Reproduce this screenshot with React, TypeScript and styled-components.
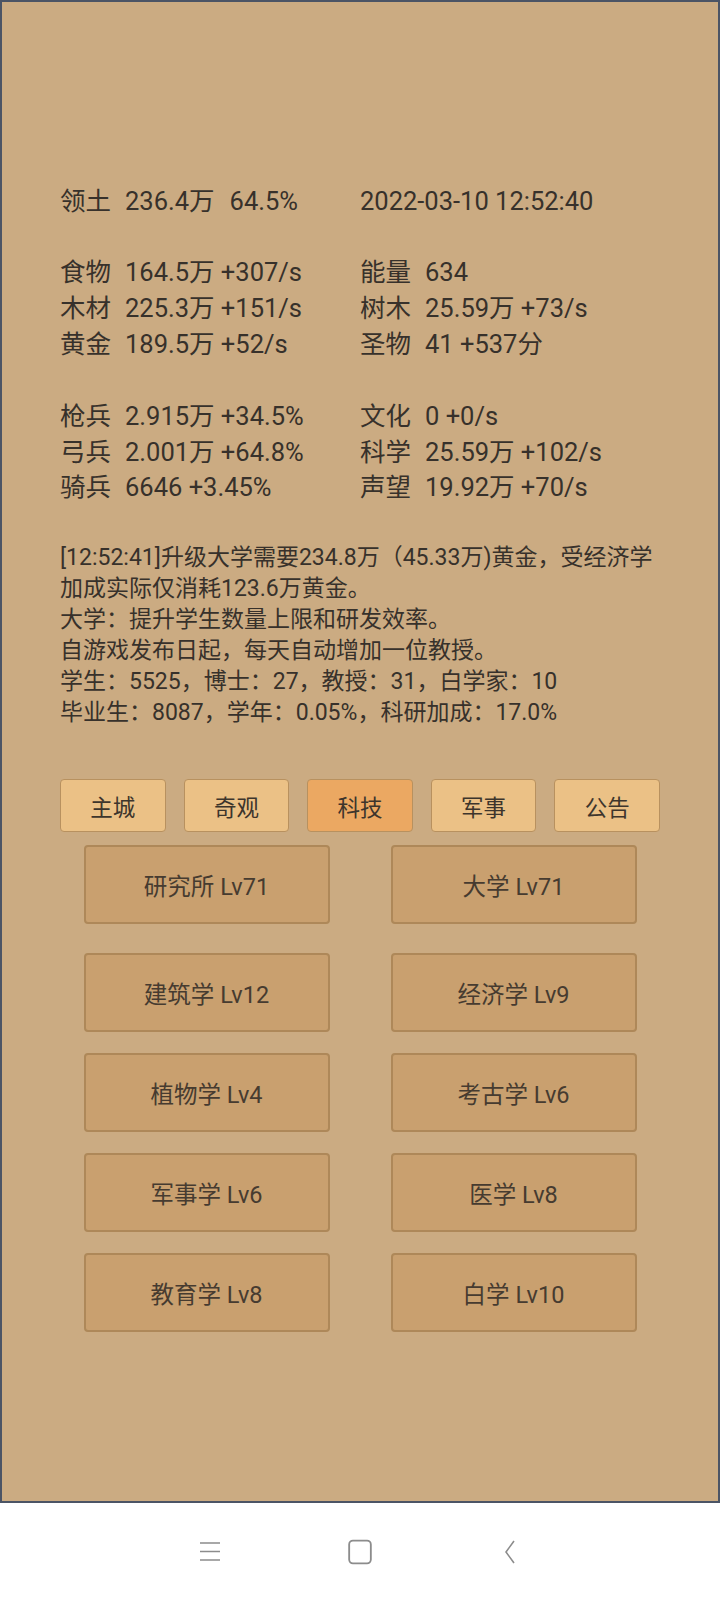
import React from "react";
import styled, { createGlobalStyle } from "styled-components";

const GlobalStyle = createGlobalStyle`
  html, body {
    margin: 0;
    padding: 0;
    background: #ffffff;
  }
  body {
    font-family: Roboto, "Noto Sans CJK SC", sans-serif;
    -webkit-font-smoothing: antialiased;
  }
  * {
    box-sizing: border-box;
  }
`;

type Stat = { label: string; value: string; extra?: string };

const statGroups: Stat[][][] = [
  [
    [{ label: "领土", value: "236.4万", extra: "64.5%" }],
    [{ label: "", value: "2022-03-10 12:52:40" }],
  ],
  [
    [
      { label: "食物", value: "164.5万 +307/s" },
      { label: "木材", value: "225.3万 +151/s" },
      { label: "黄金", value: "189.5万 +52/s" },
    ],
    [
      { label: "能量", value: "634" },
      { label: "树木", value: "25.59万 +73/s" },
      { label: "圣物", value: "41 +537分" },
    ],
  ],
  [
    [
      { label: "枪兵", value: "2.915万 +34.5%" },
      { label: "弓兵", value: "2.001万 +64.8%" },
      { label: "骑兵", value: "6646 +3.45%" },
    ],
    [
      { label: "文化", value: "0 +0/s" },
      { label: "科学", value: "25.59万 +102/s" },
      { label: "声望", value: "19.92万 +70/s" },
    ],
  ],
];

const logLines = [
  "[12:52:41]升级大学需要234.8万（45.33万)黄金，受经济学加成实际仅消耗123.6万黄金。",
  "大学：提升学生数量上限和研发效率。",
  "自游戏发布日起，每天自动增加一位教授。",
  "学生：5525，博士：27，教授：31，白学家：10",
  "毕业生：8087，学年：0.05%，科研加成：17.0%",
];

const tabs = ["主城", "奇观", "科技", "军事", "公告"];

const techs = [
  "研究所 Lv71",
  "大学 Lv71",
  "建筑学 Lv12",
  "经济学 Lv9",
  "植物学 Lv4",
  "考古学 Lv6",
  "军事学 Lv6",
  "医学 Lv8",
  "教育学 Lv8",
  "白学 Lv10",
];

function App() {
  return (
    <>
      <GlobalStyle />
      <Screen>
        <Frame>
          <Content>
            {statGroups.map((group, gi) => (
              <StatGroup key={gi}>
                {group.map((col, ci) => (
                  <StatColumn key={ci}>
                    {col.map((s, si) => (
                      <StatLine key={si}>
                        {s.label && <StatLabel>{s.label}</StatLabel>}
                        <span>{s.value}</span>
                        {s.extra && <StatExtra>{s.extra}</StatExtra>}
                      </StatLine>
                    ))}
                  </StatColumn>
                ))}
              </StatGroup>
            ))}

            <Log>
              {logLines.map((line, i) => (
                <LogLine key={i}>{line}</LogLine>
              ))}
            </Log>

            <TabBar>
              {tabs.map((t) => (
                <Tab key={t} $active={t === "科技"}>
                  {t}
                </Tab>
              ))}
            </TabBar>

            <TechGrid>
              {techs.map((t, i) => (
                <TechButton key={t} $spaced={i < 2}>
                  {t}
                </TechButton>
              ))}
            </TechGrid>
          </Content>
        </Frame>

        <NavBar>
          <NavIcon viewBox="0 0 24 24" width="24" height="24">
            <path d="M2 3h20M2 11.5h20M2 20h20" stroke="#8c8c8c" strokeWidth="1.5" fill="none" />
          </NavIcon>
          <NavIcon viewBox="0 0 24 24" width="26" height="26">
            <rect x="2" y="1.5" width="20" height="21" rx="3.5" stroke="#8c8c8c" strokeWidth="1.7" fill="none" />
          </NavIcon>
          <NavIcon viewBox="0 0 24 24" width="24" height="26">
            <path d="M16 1L8 12l8 11" stroke="#8c8c8c" strokeWidth="1.6" fill="none" />
          </NavIcon>
        </NavBar>
      </Screen>
    </>
  );
}

const Screen = styled.div`
  width: 720px;
  display: flex;
  flex-direction: column;
`;

const Frame = styled.div`
  width: 720px;
  height: 1503px;
  background: #cbab82;
  border: 2px solid #4b5465;
  color: #37312b;
`;

const Content = styled.div`
  width: 600px;
  margin: 0 auto;
  padding-top: 182px;
  display: flex;
  flex-direction: column;
`;

const StatGroup = styled.div`
  display: grid;
  grid-template-columns: 300px 300px;
  margin-bottom: 35.5px;

  &:nth-child(3) {
    margin-bottom: 36px;
  }
`;

const StatColumn = styled.div`
  display: flex;
  flex-direction: column;
`;

const StatLine = styled.div`
  display: flex;
  align-items: baseline;
  font-size: 25.5px;
  line-height: 35.9px;
  white-space: nowrap;
`;

const StatLabel = styled.span`
  width: 65px;
  flex: none;
`;

const StatExtra = styled.span`
  margin-left: 15px;
`;

const Log = styled.div`
  display: flex;
  flex-direction: column;
  font-size: 23px;
  line-height: 31px;
  margin-bottom: 51px;
`;

const LogLine = styled.div`
  word-break: break-all;
`;

const TabBar = styled.div`
  display: flex;
  gap: 18px;
  margin-bottom: 13px;
`;

const Tab = styled.div<{ $active?: boolean }>`
  flex: 1;
  height: 53px;
  display: flex;
  align-items: center;
  justify-content: center;
  font-size: 22.5px;
  color: #3d352c;
  background: ${(p) => (p.$active ? "#eba862" : "#ebc186")};
  border: 1.5px solid #b8915f;
  border-radius: 4px;
`;

const TechGrid = styled.div`
  display: grid;
  grid-template-columns: 246px 246px;
  justify-content: center;
  column-gap: 61px;
  row-gap: 21px;
`;

const TechButton = styled.div<{ $spaced?: boolean }>`
  height: 79px;
  display: flex;
  align-items: center;
  justify-content: center;
  font-size: 23.5px;
  color: #463b30;
  background: #c9a06f;
  border: 2px solid #ae8859;
  border-radius: 4px;
  margin-bottom: ${(p) => (p.$spaced ? "8px" : "0")};
`;

const NavBar = styled.div`
  height: 97px;
  background: #ffffff;
  display: flex;
  align-items: center;
  justify-content: center;
  gap: 125px;
`;

const NavIcon = styled.svg`
  display: block;
`;

export default App;
